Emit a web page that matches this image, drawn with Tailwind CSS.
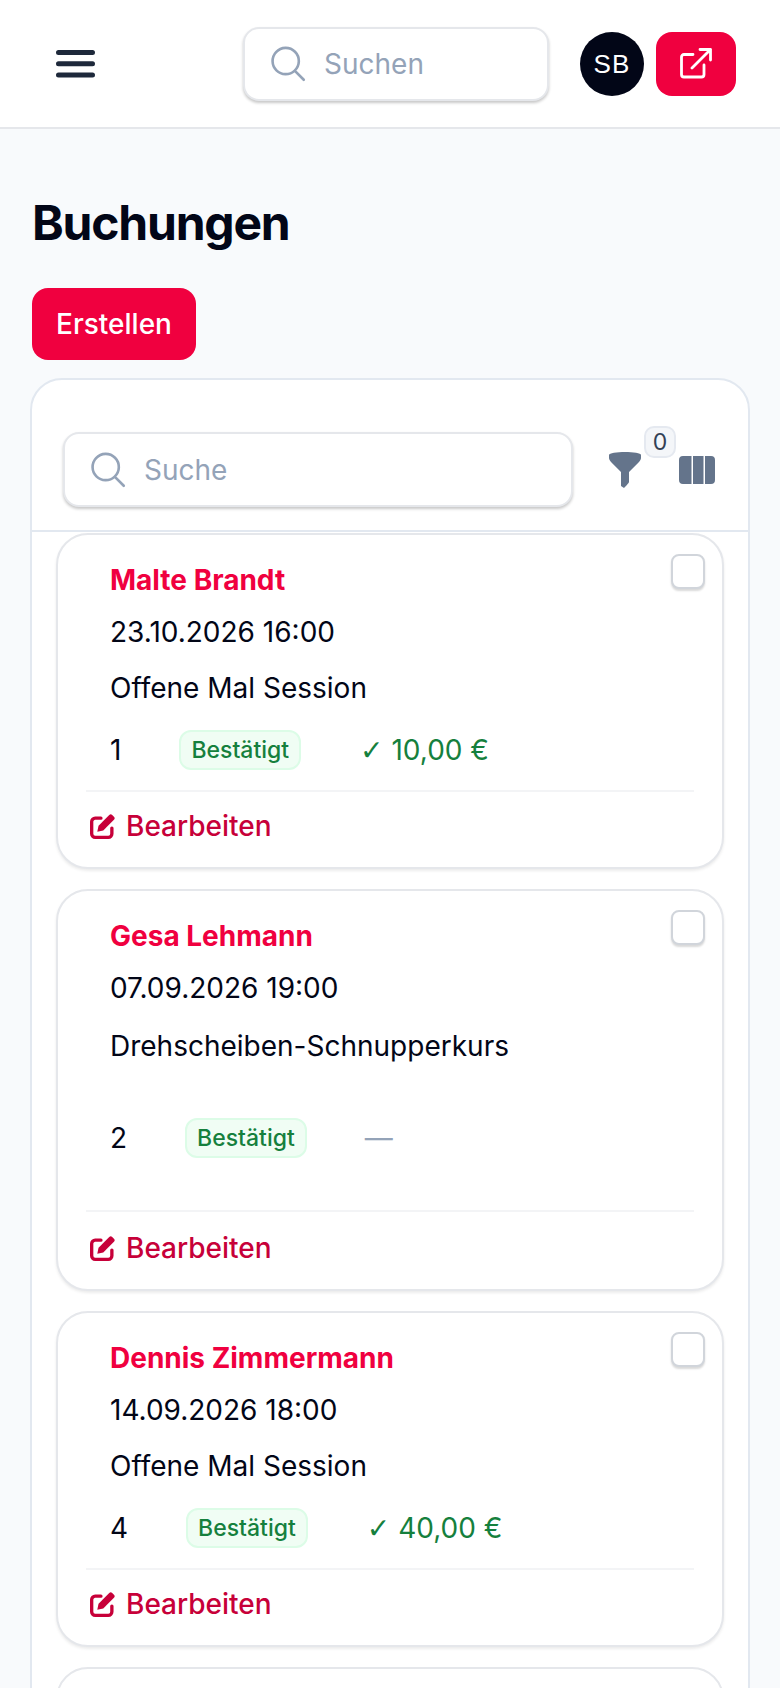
<!doctype html>
<html>
<head>
    <meta charset="UTF-8">
    <meta name="viewport" content="width=device-width, initial-scale=1.0">
    <script src="https://cdn.jsdelivr.net/npm/@tailwindcss/browser@4"></script>
</head>
<body class="bg-[#f8fafc] font-['Inter',sans-serif] text-[#020617]">
<div class="h-[1688px] overflow-hidden">
    <!-- top bar -->
    <header class="h-[129px] bg-white border-b-2 border-[#e5e7eb] flex items-start pt-[27px]">
        <button class="ml-[52px] mt-[15px] w-[48px] h-[48px] text-[#1e293b]">
            <svg viewBox="0 0 48 48" class="w-[48px] h-[48px]" fill="none" stroke="currentColor" stroke-width="5" stroke-linecap="round"><path d="M6.500 10.500h34M6.500 21.800h34M6.500 33h34"/></svg>
        </button>
        <div class="ml-[143px] w-[306px] h-[74px] rounded-[16px] border-2 border-[#e5e7eb] shadow-[0_2px_3px_rgba(0,0,0,0.22)] bg-white flex items-center pl-[22px]">
            <svg viewBox="0 0 24 24" class="w-[42px] h-[42px] shrink-0 text-[#94a3b8]" fill="none" stroke="currentColor" stroke-width="1.500" stroke-linecap="round" stroke-linejoin="round"><path d="m21 21-5.200-5.200M15.800 15.800A7.500 7.500 0 1 0 5.200 5.200a7.500 7.500 0 0 0 10.600 10.600Z"/></svg>
            <span class="ml-[15px] text-[28px] leading-[40px] text-[#94a3b8]">Suchen</span>
        </div>
        <div class="ml-[31px] mt-[5px] w-[64px] h-[64px] rounded-full bg-[#020617] text-white flex items-center justify-center text-[26px] tracking-[0.04em] font-['Liberation_Sans',sans-serif]">SB</div>
        <button class="ml-[12px] mt-[5px] w-[80px] h-[64px] rounded-[16px] bg-[#f0003f] text-white flex items-center justify-center">
            <svg viewBox="0 0 32 32" class="w-[32px] h-[32px]" fill="none" stroke="currentColor" stroke-width="2.800" stroke-linecap="round" stroke-linejoin="round"><path d="M13 6.500H4a2.500 2.500 0 0 0-2.500 2.500v17.500A2.500 2.500 0 0 0 4 29h17.500a2.500 2.500 0 0 0 2.500-2.500V17M12 20 30.500 1.500M20 1.500h10.500V12"/></svg>
        </button>
    </header>

    <main class="px-[32px]">
        <h1 class="mt-[62px] text-[48px] leading-[64px] font-bold tracking-[-0.025em]">Buchungen</h1>
        <button class="mt-[33px] h-[72px] w-[164px] rounded-[16px] bg-[#f0003f] text-white text-[28px] font-medium">Erstellen</button>

        <section class="-mx-[2px] mt-[18px] w-[720px] h-[1400px] bg-white border-2 border-[#e2e8f0] rounded-[32px] overflow-hidden">
            <!-- toolbar -->
            <div class="relative h-[152px] border-b-2 border-[#e2e8f0] pt-[52px] pl-[31px] flex items-start">
                <div class="w-[510px] h-[75px] rounded-[16px] border-2 border-[#e5e7eb] shadow-[0_2px_3px_rgba(0,0,0,0.22)] bg-white flex items-center pl-[22px]">
                    <svg viewBox="0 0 24 24" class="w-[42px] h-[42px] shrink-0 text-[#94a3b8]" fill="none" stroke="currentColor" stroke-width="1.500" stroke-linecap="round" stroke-linejoin="round"><path d="m21 21-5.200-5.200M15.800 15.800A7.500 7.500 0 1 0 5.200 5.200a7.500 7.500 0 0 0 10.600 10.600Z"/></svg>
                    <span class="ml-[15px] text-[28px] leading-[40px] text-[#94a3b8]">Suche</span>
                </div>
                <svg viewBox="0 0 32 36" class="ml-[36px] mt-[20px] w-[32px] h-[36px] text-[#64748b]" fill="currentColor"><path d="M0 3C0 1 8 0 16 0s16 1 16 3v3c0 1-1 3-2 4L20 20v10c0 1-4 5-5 6l-3-2V20L2 10C1 9 0 7 0 6Z"/></svg>
                <svg viewBox="0 0 36 28" class="ml-[38px] mt-[24px] w-[36px] h-[28px] text-[#64748b]" fill="currentColor"><path d="M4 0h8.500v28H4a4 4 0 0 1-4-4V4a4 4 0 0 1 4-4ZM14 0h10.500v28H14ZM26 0h6a4 4 0 0 1 4 4v20a4 4 0 0 1-4 4h-6Z"/></svg>
                <span class="absolute left-[612px] top-[46px] w-[32px] h-[32px] rounded-[10px] bg-[#f4f6f9] border-2 border-[#e5e9f0] flex items-center justify-center text-[23px] leading-none text-[#334155]">0</span>
            </div>

            <!-- bookings -->
            <div class="pt-[1px] px-[24px] flex flex-col gap-[20px]">
                <article class="relative h-[336px] bg-white rounded-[32px] border-2 border-[#e5e7eb] shadow-[0_2px_3px_rgba(0,0,0,0.08)] px-[28px] pt-[25px] text-[28px] leading-[40px]">
                    <span class="absolute top-[19px] right-[17px] w-[34px] h-[35px] rounded-[8px] border-2 border-[#d1d5db] shadow-[0_2px_2px_rgba(0,0,0,0.15)] bg-white"></span>
                    <div class="pl-[24px]">
                        <div class="font-bold text-[#f0003f]">Malte Brandt</div>
                        <div class="mt-[12px]">23.10.2026 16:00</div>
                        <div class="mt-[16px]">Offene Mal Session</div>
                        <div class="mt-[22px] flex items-center h-[40px]">
                            <span>1</span>
                            <span class="ml-[58px] h-[40px] px-[10px] rounded-[12px] bg-[#f0fdf4] border-2 border-[#dcfce7] text-[#15803d] text-[23px] leading-[36px] font-medium">Bestätigt</span>
                            <span class="ml-[59px] text-[#15803d]"><span class="font-['DejaVu_Sans']">✓</span> 10,00 €</span>
                        </div>
                    </div>
                    <div class="mt-[20px] border-t-2 border-[#f3f4f6] pt-[14px] pl-[4px] flex items-center gap-[11px] text-[#c70039] font-medium">
                        <svg viewBox="0 0 24 24" class="w-[25px] h-[25px]" fill="none"><path stroke="currentColor" stroke-width="3.200" stroke-linecap="round" d="M10.500 4H5a3.400 3.400 0 0 0-3.400 3.400V19A3.400 3.400 0 0 0 5 22.400h12.600A3.400 3.400 0 0 0 21 19v-5.500"/><path fill="currentColor" d="M18.500 1a2 2 0 0 1 2.800 0l1.700 1.700a2 2 0 0 1 0 2.800L12.700 15.800 7 17l1.200-5.700Z"/></svg>
                        <span>Bearbeiten</span>
                    </div>
                </article>

                <article class="relative h-[402px] bg-white rounded-[32px] border-2 border-[#e5e7eb] shadow-[0_2px_3px_rgba(0,0,0,0.08)] px-[28px] pt-[25px] text-[28px] leading-[40px]">
                    <span class="absolute top-[19px] right-[17px] w-[34px] h-[35px] rounded-[8px] border-2 border-[#d1d5db] shadow-[0_2px_2px_rgba(0,0,0,0.15)] bg-white"></span>
                    <div class="pl-[24px]">
                        <div class="font-bold text-[#f0003f]">Gesa Lehmann</div>
                        <div class="mt-[12px]">07.09.2026 19:00</div>
                        <div class="mt-[18px]">Drehscheiben-Schnupperkurs</div>
                        <div class="mt-[52px] flex items-center h-[40px]">
                            <span>2</span>
                            <span class="ml-[58px] h-[40px] px-[10px] rounded-[12px] bg-[#f0fdf4] border-2 border-[#dcfce7] text-[#15803d] text-[23px] leading-[36px] font-medium">Bestätigt</span>
                            <span class="ml-[58px] text-[#94a3b8]">—</span>
                        </div>
                    </div>
                    <div class="mt-[52px] border-t-2 border-[#f3f4f6] pt-[16px] pl-[4px] flex items-center gap-[11px] text-[#c70039] font-medium">
                        <svg viewBox="0 0 24 24" class="w-[25px] h-[25px]" fill="none"><path stroke="currentColor" stroke-width="3.200" stroke-linecap="round" d="M10.500 4H5a3.400 3.400 0 0 0-3.400 3.400V19A3.400 3.400 0 0 0 5 22.400h12.600A3.400 3.400 0 0 0 21 19v-5.500"/><path fill="currentColor" d="M18.500 1a2 2 0 0 1 2.800 0l1.700 1.700a2 2 0 0 1 0 2.800L12.700 15.800 7 17l1.200-5.700Z"/></svg>
                        <span>Bearbeiten</span>
                    </div>
                </article>

                <article class="relative h-[336px] bg-white rounded-[32px] border-2 border-[#e5e7eb] shadow-[0_2px_3px_rgba(0,0,0,0.08)] px-[28px] pt-[25px] text-[28px] leading-[40px]">
                    <span class="absolute top-[19px] right-[17px] w-[34px] h-[35px] rounded-[8px] border-2 border-[#d1d5db] shadow-[0_2px_2px_rgba(0,0,0,0.15)] bg-white"></span>
                    <div class="pl-[24px]">
                        <div class="font-bold text-[#f0003f]">Dennis Zimmermann</div>
                        <div class="mt-[12px]">14.09.2026 18:00</div>
                        <div class="mt-[16px]">Offene Mal Session</div>
                        <div class="mt-[22px] flex items-center h-[40px]">
                            <span>4</span>
                            <span class="ml-[58px] h-[40px] px-[10px] rounded-[12px] bg-[#f0fdf4] border-2 border-[#dcfce7] text-[#15803d] text-[23px] leading-[36px] font-medium">Bestätigt</span>
                            <span class="ml-[59px] text-[#15803d]"><span class="font-['DejaVu_Sans']">✓</span> 40,00 €</span>
                        </div>
                    </div>
                    <div class="mt-[20px] border-t-2 border-[#f3f4f6] pt-[14px] pl-[4px] flex items-center gap-[11px] text-[#c70039] font-medium">
                        <svg viewBox="0 0 24 24" class="w-[25px] h-[25px]" fill="none"><path stroke="currentColor" stroke-width="3.200" stroke-linecap="round" d="M10.500 4H5a3.400 3.400 0 0 0-3.400 3.400V19A3.400 3.400 0 0 0 5 22.400h12.600A3.400 3.400 0 0 0 21 19v-5.500"/><path fill="currentColor" d="M18.500 1a2 2 0 0 1 2.800 0l1.700 1.700a2 2 0 0 1 0 2.800L12.700 15.800 7 17l1.200-5.700Z"/></svg>
                        <span>Bearbeiten</span>
                    </div>
                </article>

                <article class="h-[336px] bg-white rounded-[32px] border-2 border-[#e5e7eb]"></article>
            </div>
        </section>
    </main>
</div>
</body>
</html>
